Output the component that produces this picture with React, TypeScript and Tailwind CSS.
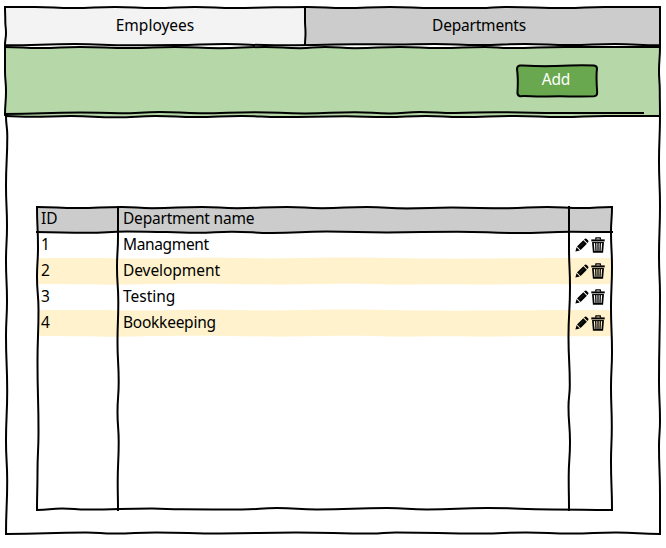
import type { ReactNode } from "react";

type Point = [number, number];

/** Smooth pen stroke running through the given points. */
function stroke(points: Point[]): string {
  let d = `M${points[0][0]} ${points[0][1]}`;
  for (let i = 1; i < points.length; i++) {
    const [x0, y0] = points[i - 1];
    const [x1, y1] = points[i];
    if (Math.abs(x1 - x0) > Math.abs(y1 - y0)) {
      const m = (x0 + x1) / 2;
      d += `C${m} ${y0} ${m} ${y1} ${x1} ${y1}`;
    } else {
      const m = (y0 + y1) / 2;
      d += `C${x0} ${m} ${x1} ${m} ${x1} ${y1}`;
    }
  }
  return d;
}

function Ink({ lines, width = 2 }: { lines: Point[][]; width?: number }) {
  return (
    <svg
      className="pointer-events-none absolute left-0 top-0 h-full w-full overflow-visible"
      fill="none"
      stroke="#000"
      strokeWidth={width}
      strokeLinecap="square"
      strokeLinejoin="round"
    >
      {lines.map((line, i) => (
        <path key={i} d={stroke(line)} />
      ))}
    </svg>
  );
}

function Label({ children, className = "" }: { children: ReactNode; className?: string }) {
  return <span className={`inline-block whitespace-nowrap ${className}`}>{children}</span>;
}

function Pencil() {
  return (
    <svg className="h-[14px] w-[14px]" viewBox="0 0 14 14">
      <path d="M.4 13.6 1.5 9.3 4.8 12.4Z" />
      <path d="M2 8.5 8.3 2.2 11.9 5.7 5.6 12Z" />
      <path d="M9 1.6 10 .7Q10.7.1 11.4.7L13.2 2.5Q13.8 3.2 13.2 3.9L12.5 4.9Z" />
      <path d="M3.6 9.9 8.8 4.7" stroke="#555" strokeWidth=".5" />
    </svg>
  );
}

function Trash() {
  return (
    <svg className="h-4 w-[14px]" viewBox="0 0 14 16" fill="none" stroke="#000">
      <path d="M4.6 2.6 5 .9H9.2L9.6 2.6" strokeWidth="1.3" />
      <path d="M.3 3.4H13.7" strokeWidth="2" />
      <path d="M1.2 5.6H12.8" strokeWidth="1.1" />
      <path d="M1.9 5.5 2.7 14.8H11.3L12.1 5.5" strokeWidth="1.7" />
      <path d="M4.7 6 5 14.5M7 6V14.5M9.3 6 9 14.5" strokeWidth="1.3" />
    </svg>
  );
}

function Stripe() {
  return (
    <svg className="absolute left-0 top-0 h-full w-full overflow-visible" fill="#fff2cc">
      <path d="M1 .2C30-.2 60 0 90 .4S150-.6 185-.2 230 .8 265 0 310-.8 355 0 420 .7 455 .5 510-.4 574 0V26C540 26.7 515 25.4 480 26.2S415 26 380 26.4 330 25.3 300 25.7 240 26.8 205 26.2 140 25.3 105 26.2 45 26.4 1 26Z" />
    </svg>
  );
}

const departments = [
  { id: 1, name: "Managment", width: "tracking-[-0.36px]" },
  { id: 2, name: "Development", width: "tracking-[-0.07px]" },
  { id: 3, name: "Testing", width: "tracking-[0px]" },
  { id: 4, name: "Bookkeeping", width: "tracking-[-0.25px]" },
];

const tabLines: Point[][] = [
  [[0, 0], [30, 0], [68, 1], [110, 0], [150, 1], [190, 0], [230, 1], [270, 0.3], [302, 0], [340, 1], [385, 0], [430, 1], [475, 1], [500, 0], [560, 1], [600, 0], [655, 0]],
  [[0, 0], [0.3, 14], [1, 26], [0, 38]],
  [[300, 0], [300, 14], [300.5, 26], [300, 38]],
  [[655, 0], [655, 38]],
  [[0, 38.3], [70, 37], [125, 38.3], [170, 38], [220, 37], [270, 38.3], [310, 38], [350, 37.2], [390, 37.5], [430, 37], [475, 38], [520, 37], [565, 38], [610, 37], [655, 38.3]],
];

const toolbarLines: Point[][] = [
  [[0, 0], [35, 1], [75, 0], [125, 1], [170, 0], [215, 1.2], [260, 0], [295, 1.2], [320, 0], [350, 1.2], [395, 0], [435, 1], [480, 0], [505, 1], [560, 0], [655, 0]],
  [[0, 0], [0, 24], [1, 44], [0, 68]],
  [[655, 0], [654, 24], [654.8, 44], [655, 68]],
  [[0, 67], [75, 65.4], [115, 66.3], [155, 65], [195, 66.2], [250, 65.2], [300, 66.5], [350, 65.2], [385, 66.5], [415, 65], [450, 66], [490, 65.2], [540, 66], [638, 66]],
];

const bodyLines: Point[][] = [
  [[0, 0], [25, 0.8], [65, 0], [110, 1.3], [150, 0], [190, 1], [235, 0], [275, 1], [340, 0.3], [380, 1], [420, 0], [455, 1], [510, 0], [555, 1], [600, 0], [654, 0]],
  [[0, 0], [1.3, 20], [0, 70], [1, 110], [0, 145], [1, 185], [0, 220], [1.2, 275], [0, 325], [1.2, 365], [0, 418]],
  [[654, 0], [653, 45], [654, 90], [653, 140], [654, 180], [653, 265], [654, 305], [653, 330], [654, 378], [654, 418]],
  [[0, 418], [80, 416.5], [108, 417.5], [150, 416.5], [215, 417.5], [290, 416.5], [365, 417.5], [390, 416.5], [475, 417.5], [520, 416.5], [565, 417.5], [610, 416.5], [654, 418]],
];

const tableLines: Point[][] = [
  [[0, 0], [40, 1], [85, 0], [115, 1.2], [165, 0], [200, 1.2], [250, 0], [285, 1.2], [330, 0], [370, 1.4], [415, 0.6], [470, 1.2], [510, 0], [545, 1], [575, 0]],
  [[0, 0], [1, 40], [0, 70], [1.5, 103], [0.5, 155], [1.5, 225], [0.5, 265], [0, 303]],
  [[0, 25], [50, 25.8], [90, 24.6], [130, 25], [160, 25.8], [195, 24.7], [235, 26], [290, 24.6], [350, 25.4], [420, 24.7], [480, 26], [535, 24.8], [575, 25]],
  [[81, 0], [81, 30], [80, 60], [81.3, 95], [80.5, 135], [81.7, 175], [80.5, 205], [81.7, 235], [80.7, 275], [81, 303]],
  [[532, 0], [532, 40], [533, 80], [531.5, 130], [532.8, 178], [531.5, 200], [533, 235], [531.7, 270], [532, 303]],
  [[575, 0], [574, 25], [575, 60], [574, 100], [575, 145], [574, 180], [574.8, 220], [574, 255], [575, 303]],
  [[0, 303], [25, 301.5], [50, 302.5], [115, 301.5], [145, 302.3], [205, 302.5], [240, 301], [280, 302.5], [350, 301], [390, 302.5], [450, 301], [515, 302.4], [575, 303]],
];

const grid = "grid grid-cols-[81px_451px_43px]";

export default function App() {
  return (
    <div className="h-[548px] w-[666px] bg-white pl-[5px] pt-[7px] font-['Noto_Sans',sans-serif] text-[15.5px] leading-[26px] text-black">
      <div className="relative z-10 flex h-[40px] w-[655px]">
        <button className="h-[38px] w-[300px] bg-[#f3f3f3] pb-[2px]">
          <Label>Employees</Label>
        </button>
        <button className="h-[38px] w-[355px] bg-[#ccc] pb-[2px] pr-[7px]">
          <Label className="tracking-[-0.2px]">Departments</Label>
        </button>
        <Ink lines={tabLines} />
      </div>

      <div className="relative flex h-[69px] w-[655px] items-start justify-end bg-[#b6d7a8] pr-[63px] pt-[18px]">
        <button className="relative h-[32px] w-[80px] rounded-[3px] bg-[#6aa84f] text-white">
          <Label className="pb-[4px] pr-[2px] tracking-[-0.2px]">Add</Label>
          <svg className="absolute left-0 top-0 h-full w-full overflow-visible" fill="none" stroke="#000" strokeWidth="2">
            <path d="M3 .5C15 1 25 1.5 37 1S62-.1 77 .5Q80 1 80 3.5C79 10 79.5 18 80.2 28Q80 31 77 31.3C60 31.8 45 31 30 31.5S12 30.5 3 31.2Q0 30.5 .5 27C1 19 1 11 0 4Q0 1 3 .5Z" />
          </svg>
        </button>
        <Ink lines={toolbarLines} />
      </div>

      <div className="relative ml-px h-[418px] w-[654px] pl-[31px] pt-[91px]">
        <Ink lines={bodyLines} />
        <div className="relative h-[303px] w-[575px]">
          <div className={`${grid} h-[25px] bg-[#ccc] leading-[23px]`}>
            <Label className="pl-[4px]">ID</Label>
            <Label className="pl-[5px] tracking-[-0.2px]">Department name</Label>
          </div>
          {departments.map((d, i) => (
            <div key={d.id} className={`${grid} relative h-[26px] leading-[24px]`}>
              {i % 2 === 1 && <Stripe />}
              <Label className="relative pl-[4px]">{d.id}</Label>
              <Label className={`relative pl-[5px] ${d.width}`}>{d.name}</Label>
              <div className="relative flex h-[26px] items-center gap-[2px] pl-[6px]">
                <Pencil />
                <Trash />
              </div>
            </div>
          ))}
          <Ink lines={tableLines} />
        </div>
      </div>
    </div>
  );
}
